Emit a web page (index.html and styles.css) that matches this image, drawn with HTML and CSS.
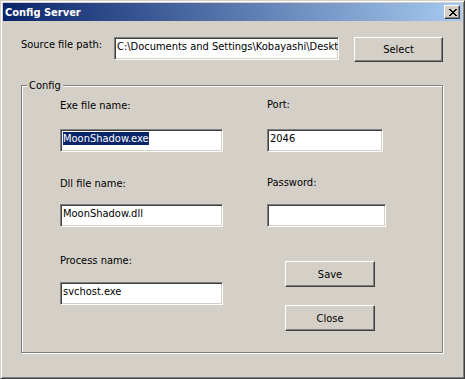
FILE: index.html
```html
<!DOCTYPE html>
<html lang="en">
<head>
    <meta charset="UTF-8">
    <title>Config Server</title>
    <link rel="stylesheet" href="styles.css">
</head>
<body>
    <!-- Dialog window -->
    <div class="window">
        <div class="titlebar">
            <span class="title">Config Server</span>
            <button class="title-close">
                <svg width="8" height="7" viewBox="0 0 8 7" shape-rendering="crispEdges">
                    <path fill="#000" d="M0 0h2v1H0z M6 0h2v1H6z M1 1h2v1H1z M5 1h2v1H5z M2 2h4v1H2z M3 3h2v1H3z M2 4h4v1H2z M1 5h2v1H1z M5 5h2v1H5z M0 6h2v1H0z M6 6h2v1H6z"/>
                </svg>
            </button>
        </div>

        <div class="dialog-body">
            <!-- Source path row -->
            <div class="source-row">
                <div class="label source-label">Source file path:</div>
                <div class="textbox source-box">C:\Documents and Settings\Kobayashi\Deskto</div>
                <button class="btn select-btn">Select</button>
            </div>

            <!-- Config group -->
            <div class="group">
                <span class="group-title">Config</span>

                <div class="col col-left">
                    <div class="label">Exe file name:</div>
                    <div class="textbox name-box exe-box"><span class="selected">MoonShadow.exe</span></div>

                    <div class="label dll-label">Dll file name:</div>
                    <div class="textbox name-box dll-box">MoonShadow.dll</div>

                    <div class="label process-label">Process name:</div>
                    <div class="textbox name-box process-box">svchost.exe</div>
                </div>

                <div class="col col-right">
                    <div class="label">Port:</div>
                    <div class="textbox port-box">2046</div>

                    <div class="label password-label">Password:</div>
                    <div class="textbox password-box"></div>

                    <button class="btn action-btn save-btn">Save</button>
                    <button class="btn action-btn close-btn">Close</button>
                </div>
            </div>
        </div>
    </div>
</body>
</html>
```

FILE: styles.css
```css
:root {
    --face: #d4d0c8;
    --shadow: #808080;
    --dark: #404040;
    --light: #ffffff;
    --select: #0a246a;
}

* {
    margin: 0;
    padding: 0;
    box-sizing: border-box;
}

html, body {
    width: 465px;
    height: 379px;
    overflow: hidden;
}

body {
    font-family: "DejaVu Sans Condensed", "Liberation Sans", sans-serif;
    font-size: 11px;
    line-height: 13px;
    color: #000;
    background: var(--face);
}

.window {
    width: 465px;
    height: 379px;
    padding: 2px;
    background: var(--face);
    border: 1px solid;
    border-color: var(--face) var(--dark) var(--dark) var(--face);
    box-shadow: inset 1px 1px var(--light), inset -1px -1px var(--shadow);
}

/* Title bar */
.titlebar {
    height: 18px;
    display: flex;
    align-items: center;
    padding-left: 2px;
    background: linear-gradient(to right, #0a246a, #a6caf0);
}

.title {
    color: #fff;
    font-weight: bold;
}

.title-close {
    margin-left: auto;
    margin-right: 2px;
    width: 16px;
    height: 14px;
    display: flex;
    align-items: center;
    justify-content: center;
    padding-left: 1px;
    background: var(--face);
    border: 1px solid;
    border-color: var(--light) var(--dark) var(--dark) var(--light);
    box-shadow: inset -1px -1px var(--shadow);
}

.title-close svg {
    display: block;
}

/* Body */
.dialog-body {
    padding: 16px 0 0 18px;
}

.label {
    white-space: nowrap;
}

.textbox {
    height: 23px;
    padding: 2px 2px;
    background: #fff;
    border: 1px solid;
    border-color: var(--shadow) var(--light) var(--light) var(--shadow);
    box-shadow: inset 1px 1px var(--dark), inset -1px -1px var(--face);
    white-space: nowrap;
    overflow: hidden;
}

.btn {
    font: inherit;
    color: #000;
    background: var(--face);
    border: 1px solid;
    border-color: var(--light) var(--dark) var(--dark) var(--light);
    box-shadow: inset -1px -1px var(--shadow);
    display: block;
}

.source-row {
    display: flex;
    align-items: flex-start;
}

.source-label {
    width: 93px;
    padding-top: 1px;
}

.source-box {
    width: 225px;
}

.select-btn {
    width: 89px;
    height: 25px;
    margin-left: 15px;
}

/* Group box */
.group {
    position: relative;
    margin-top: 23px;
    width: 422px;
    height: 268px;
    display: flex;
    padding-left: 38px;
    border: 1px solid var(--shadow);
    box-shadow: inset 1px 1px var(--light), 1px 1px var(--light);
}

.group-title {
    position: absolute;
    left: 5px;
    top: -7px;
    padding: 0 2px;
    background: var(--face);
}

.col-left {
    width: 207px;
    padding-top: 13px;
}

.col-right {
    padding-top: 12px;
}

.name-box {
    width: 163px;
}

.exe-box {
    margin-top: 17px;
}

.dll-label {
    margin-top: 25px;
}

.dll-box {
    margin-top: 14px;
}

.process-label {
    margin-top: 27px;
}

.process-box {
    margin-top: 15px;
}

.selected {
    background: var(--select);
    color: #fff;
}

.port-box {
    width: 116px;
    margin-top: 18px;
}

.password-label {
    margin-top: 24px;
}

.password-box {
    width: 119px;
    margin-top: 15px;
}

.action-btn {
    width: 90px;
    height: 26px;
    margin-left: 18px;
}

.save-btn {
    margin-top: 34px;
}

.close-btn {
    margin-top: 18px;
}
```
